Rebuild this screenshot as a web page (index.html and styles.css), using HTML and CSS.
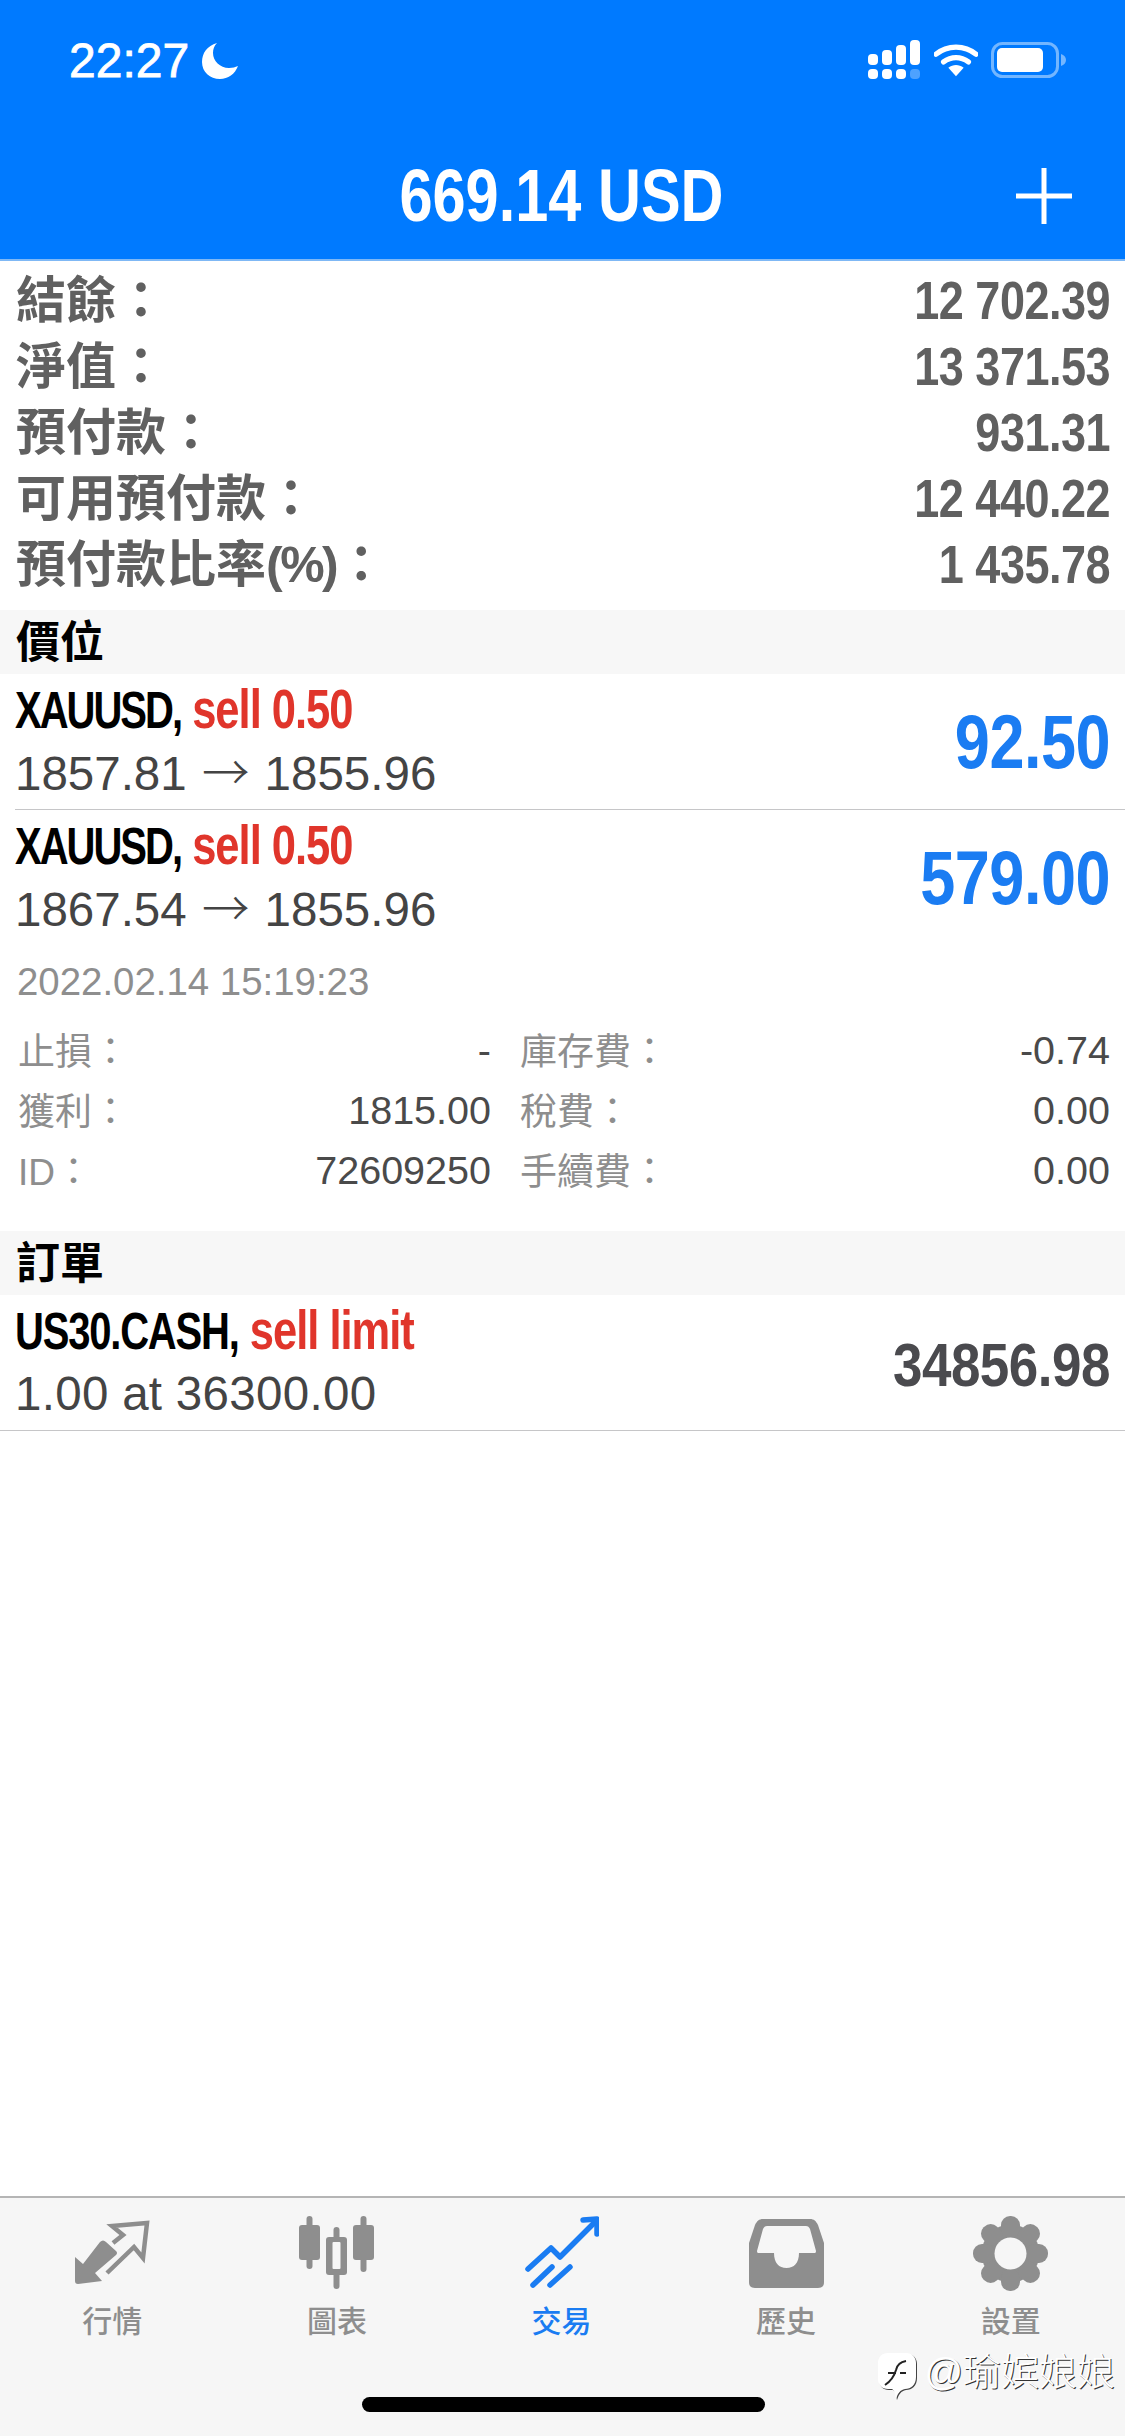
FILE: index.html
```html
<!DOCTYPE html>
<html lang="zh-Hant">
<head>
<meta charset="utf-8">
<title>Trade</title>
<link rel="stylesheet" href="styles.css">
</head>
<body>
<div class="app">
  <header class="top">
    <div class="status">
      <div class="status-left">
        <span class="clock">22:27</span>
        <svg class="moon" viewBox="0 0 36 36"><path d="M15 0C5 3 0 10 0 19C0 29 8 36 18 36C26 36 33 31 36 23C33 24 31 25 27 25C18 25 11 18 11 10C11 6 12 3 15 0Z" fill="#fff"/></svg>
      </div>
      <div class="status-right">
        <svg class="signal" viewBox="0 0 56 40"><g fill="#fff"><rect x="1" y="14" width="10" height="11" rx="4"/><rect x="15" y="10" width="10" height="15" rx="4"/><rect x="29" y="5" width="10" height="20" rx="4"/><rect x="43" y="0" width="10" height="25" rx="4"/><rect x="1" y="29" width="10" height="10" rx="4"/><rect x="15" y="29" width="10" height="10" rx="4"/><rect x="29" y="29" width="10" height="10" rx="4"/><rect x="43" y="29" width="10" height="10" rx="4" opacity=".3"/></g></svg>
        <svg class="wifi" viewBox="0 0 46 36"><path d="M2 12C14 2 32 2 44 12M10 20c8-6 18-6 26 0" fill="none" stroke="#fff" stroke-width="5.5" stroke-linecap="round"/><path d="M15 26c5-3.600 11-3.600 16 0l-8 9z" fill="#fff"/></svg>
        <svg class="battery" viewBox="0 0 76 36"><rect x="1.500" y="1.500" width="65" height="33" rx="10" fill="none" stroke="#fff" stroke-opacity=".45" stroke-width="3"/><rect x="6" y="6" width="46" height="24" rx="5" fill="#fff"/><path d="M70 12c3 1 5 3 5 6s-2 5-5 6z" fill="#fff" fill-opacity=".45"/></svg>
      </div>
    </div>
    <div class="titlebar">
      <h1 class="title"><span class="narrow">669.14 USD</span></h1>
      <svg class="plus" viewBox="0 0 56 56"><path d="M28 0v56M0 28h56" stroke="#fff" stroke-width="5"/></svg>
    </div>
  </header>

  <section class="summary">
    <div class="sum-row"><span class="sum-label">結餘：</span><span class="sum-val">12 702.39</span></div>
    <div class="sum-row"><span class="sum-label">淨值：</span><span class="sum-val">13 371.53</span></div>
    <div class="sum-row"><span class="sum-label">預付款：</span><span class="sum-val">931.31</span></div>
    <div class="sum-row"><span class="sum-label">可用預付款：</span><span class="sum-val">12 440.22</span></div>
    <div class="sum-row"><span class="sum-label">預付款比率<span class="pct">(%)</span>：</span><span class="sum-val">1 435.78</span></div>
  </section>

  <h2 class="band">價位</h2>

  <div class="pos pos-line">
    <div class="pos-main">
      <div class="pos-name"><b>XAUUSD,</b> <em>sell 0.50</em></div>
      <div class="pos-price">1857.81 <span class="arrow">→</span> 1855.96</div>
    </div>
    <div class="pos-profit">92.50</div>
  </div>

  <div class="pos">
    <div class="pos-main">
      <div class="pos-name"><b>XAUUSD,</b> <em>sell 0.50</em></div>
      <div class="pos-price">1867.54 <span class="arrow">→</span> 1855.96</div>
    </div>
    <div class="pos-profit">579.00</div>
  </div>

  <div class="detail">
    <div class="stamp">2022.02.14 15:19:23</div>
    <div class="grid">
      <span class="k">止損：</span><span class="v v-a">-</span><span class="k">庫存費：</span><span class="v">-0.74</span>
      <span class="k">獲利：</span><span class="v v-a">1815.00</span><span class="k">稅費：</span><span class="v">0.00</span>
      <span class="k">ID：</span><span class="v v-a">72609250</span><span class="k">手續費：</span><span class="v">0.00</span>
    </div>
  </div>

  <h2 class="band">訂單</h2>

  <div class="pos pos-end">
    <div class="pos-main">
      <div class="pos-name"><b>US30.CASH,</b> <em>sell limit</em></div>
      <div class="pos-price">1.00 at 36300.00</div>
    </div>
    <div class="pos-order">34856.98</div>
  </div>

  <div class="spacer"></div>

  <nav class="tabs">
    <div class="tab">
      <svg class="ico" viewBox="0 0 75 75"><path d="M0 41 8 48 25 26Q28 23 31 26L41 35Q43 37 41 39L20 57 27 65 3 68Q0 68 0 65Z" fill="#8e8e8e"/><path d="M38 27 48 19 37 10 72 7 68 42 59 31 32 57" fill="none" stroke="#8e8e8e" stroke-width="4.500"/></svg>
      <span class="tab-label">行情</span>
    </div>
    <div class="tab">
      <svg class="ico" viewBox="0 0 75 75"><g fill="#8e8e8e"><rect x="7.500" y="0" width="6" height="53" rx="3"/><rect x="0" y="9" width="21" height="35" rx="3"/><rect x="61.500" y="0" width="6" height="56" rx="3"/><rect x="54" y="9" width="21" height="35" rx="3"/><rect x="34.500" y="11" width="6" height="62" rx="3"/><rect x="27" y="21" width="21" height="38" rx="3"/></g><rect x="33.500" y="26" width="8" height="27" rx="1" fill="#f6f6f6"/></svg>
      <span class="tab-label">圖表</span>
    </div>
    <div class="tab tab-on">
      <svg class="ico" viewBox="0 0 75 75"><g fill="none" stroke="#1a7cf2" stroke-width="5.500" stroke-linecap="round" stroke-linejoin="round"><path d="M4 53 27 32 36 41 71 6"/><path d="M59 4 73 3 73 18"/><path d="M9 69 28 51"/><path d="M26 69 46 51"/></g></svg>
      <span class="tab-label">交易</span>
    </div>
    <div class="tab">
      <svg class="ico" viewBox="0 0 75 75"><path fill-rule="evenodd" fill="#8e8e8e" d="M14 3H61C65 3 67 5 69 9L75 27V66C75 70 73 72 69 72H6C2 72 0 70 0 66V27L6 9C8 5 10 3 14 3ZM18 10C16 10 15 11 14 13L8 35C8 37 9 37 10 37H25C25 47 30 52 37.500 52S50 47 50 37H65C66 37 67 37 67 35L61 13C60 11 59 10 57 10Z"/></svg>
      <span class="tab-label">歷史</span>
    </div>
    <div class="tab">
      <svg class="ico" viewBox="0 0 75 75">
        <g fill="#8e8e8e">
          <circle cx="37.500" cy="37.500" r="29"/>
          <rect x="28" y="0" width="19" height="22" rx="9"/>
          <rect x="28" y="0" width="19" height="22" rx="9" transform="rotate(45 37.500 37.500)"/>
          <rect x="28" y="0" width="19" height="22" rx="9" transform="rotate(90 37.500 37.500)"/>
          <rect x="28" y="0" width="19" height="22" rx="9" transform="rotate(135 37.500 37.500)"/>
          <rect x="28" y="0" width="19" height="22" rx="9" transform="rotate(180 37.500 37.500)"/>
          <rect x="28" y="0" width="19" height="22" rx="9" transform="rotate(225 37.500 37.500)"/>
          <rect x="28" y="0" width="19" height="22" rx="9" transform="rotate(270 37.500 37.500)"/>
          <rect x="28" y="0" width="19" height="22" rx="9" transform="rotate(315 37.500 37.500)"/>
        </g>
        <circle cx="37.500" cy="37.500" r="16" fill="#f6f6f6"/>
      </svg>
      <span class="tab-label">設置</span>
    </div>
    <div class="home"></div>
    <div class="mark">
      <svg class="mark-logo" viewBox="0 0 40 48"><path d="M11 1H29C35 1 39 5 39 11V25C39 33 34 37 28 37C23 38 21 41 19 47C18 43 18 39 15 37H11C5 37 1 33 1 27V11C1 5 5 1 11 1Z" fill="#444"/><path d="M10 0H28C34 0 38 4 38 10V24C38 32 33 36 27 36C22 37 20 40 18 46C17 42 17 38 14 36H10C4 36 0 32 0 26V10C0 4 4 0 10 0Z" fill="#fff"/><path d="M7 32C13 28 16 24 18 17C19 12 22 9 28 8M10 20H18M22 20H28" fill="none" stroke="#222" stroke-width="2"/></svg>
      <span class="mark-text">@瑜嫔娘娘</span>
    </div>
  </nav>
</div>
</body>
</html>
```
FILE: styles.css
```css
* { box-sizing: border-box; }
html, body { margin: 0; padding: 0; }
body { width: 1125px; height: 2436px; background: #fff; overflow: hidden; font-family: "Liberation Sans", "Noto Sans CJK TC", sans-serif; }
.app { width: 1125px; height: 2436px; display: flex; flex-direction: column; }

.top { height: 261px; background: #007aff; border-bottom: 2px solid #7fb8f5; color: #fff; }
.status { height: 120px; padding: 37px 58px 0 69px; display: flex; justify-content: space-between; align-items: flex-start; }
.status-left { display: flex; align-items: center; gap: 13px; }
.clock { font-size: 48px; font-weight: 400; line-height: 48px; -webkit-text-stroke: .8px #fff; }
.moon { width: 36px; height: 36px; }
.status-right { display: flex; align-items: center; gap: 11px; margin-top: 3px; }
.signal { width: 56px; height: 40px; }
.wifi { width: 44px; height: 36px; }
.battery { width: 76px; height: 36px; margin-left: 2px; }
.titlebar { height: 139px; padding: 12px 2px 0 0; position: relative; display: flex; justify-content: center; align-items: center; }
.title { margin: 0; font-size: 59.500px; font-weight: 700; line-height: 60px; }
.narrow { display: inline-block; transform: scaleY(1.24); }
.plus { position: absolute; right: 53px; top: 48px; width: 56px; height: 56px; }

.summary { height: 349px; padding-top: 7px; }
.sum-row { height: 66px; padding: 0 15px 0 16px; display: flex; justify-content: space-between; align-items: center; color: #606060; font-weight: 700; }
.sum-label { font-size: 50px; line-height: 66px; }
.pct { letter-spacing: -2.500px; }
.sum-val { font-size: 45px; line-height: 66px; display: inline-block; transform: scaleY(1.18); letter-spacing: -.5px; }

.band { margin: 0; height: 64px; padding: 2px 16px 0; background: #f7f7f7; color: #000; font-size: 44px; font-weight: 700; line-height: 62px; }

.pos { height: 136px; padding: 3px 15px 0 15px; display: flex; justify-content: space-between; }
.pos-line { position: relative; }
.pos-line::after { content: ""; position: absolute; left: 15px; right: 0; bottom: 0; height: 1px; background: #c6c6c8; }
.pos-end { border-bottom: 1px solid #c6c6c8; }
.pos-name { height: 63px; font-size: 40px; line-height: 64px; transform: scaleY(1.28); transform-origin: left center; font-weight: 700; white-space: nowrap; }
.pos-name b { color: #000; letter-spacing: -2px; }
.pos-end .pos-name b { letter-spacing: -1.200px; }
.pos-name em { color: #e0352b; font-style: normal; font-size: 43.500px; letter-spacing: -1px; }
.pos-price { height: 60px; font-size: 47.500px; line-height: 60px; color: #444; white-space: nowrap; }
.pos-end .pos-price { padding-top: 3px; letter-spacing: .3px; }
.arrow { font-family: "Noto Sans CJK TC", sans-serif; font-weight: 300; margin: 0 2px; }
.pos-profit { font-size: 63px; font-weight: 700; color: #1a7cf2; line-height: 131px; transform: scaleY(1.2); letter-spacing: -.5px; }
.pos-order { font-size: 53px; font-weight: 700; color: #4a4a4e; line-height: 134px; letter-spacing: -.5px; transform: scaleY(1.14); }

.detail { height: 301px; margin-top: -16px; padding: 27px 15px 0 18px; }
.stamp { height: 50px; font-size: 38.400px; line-height: 50px; color: #8e8e8e; margin-left: -1px; }
.grid { margin-top: 13px; display: grid; grid-template-columns: 200px 302px 200px 1fr; grid-auto-rows: 60px; }
.k { font-size: 37px; line-height: 60px; padding-top: 3px; color: #8e8e8e; white-space: nowrap; }
.v { font-size: 39.500px; line-height: 60px; color: #4a4a4a; text-align: right; }
.v-a { margin-right: 29px; }

.spacer { flex: 1; }

.tabs { height: 240px; background: #f6f6f6; border-top: 2px solid #b5b5b5; position: relative; display: grid; grid-template-columns: repeat(5, 1fr); align-items: start; padding: 18px 2px 0 0; }
.tab { display: flex; flex-direction: column; align-items: center; color: #8e8e8e; }
.ico { width: 75px; height: 75px; display: block; }
.tab-label { margin-top: 11px; font-size: 30px; line-height: 40px; font-weight: 500; }
.tab-on { color: #1a7cf2; }
.home { position: absolute; left: 362px; top: 199px; width: 403px; height: 15px; border-radius: 8px; background: #000; }
.mark { position: absolute; right: 10px; top: 155px; display: flex; align-items: flex-start; gap: 6px; }
.mark-logo { width: 40px; height: 48px; }
.mark-text { font-size: 38px; line-height: 38px; color: #fff; text-shadow: 1px 1px 0 #333; font-family: "Liberation Sans", "Noto Sans CJK SC", sans-serif; font-weight: 300; }
```
